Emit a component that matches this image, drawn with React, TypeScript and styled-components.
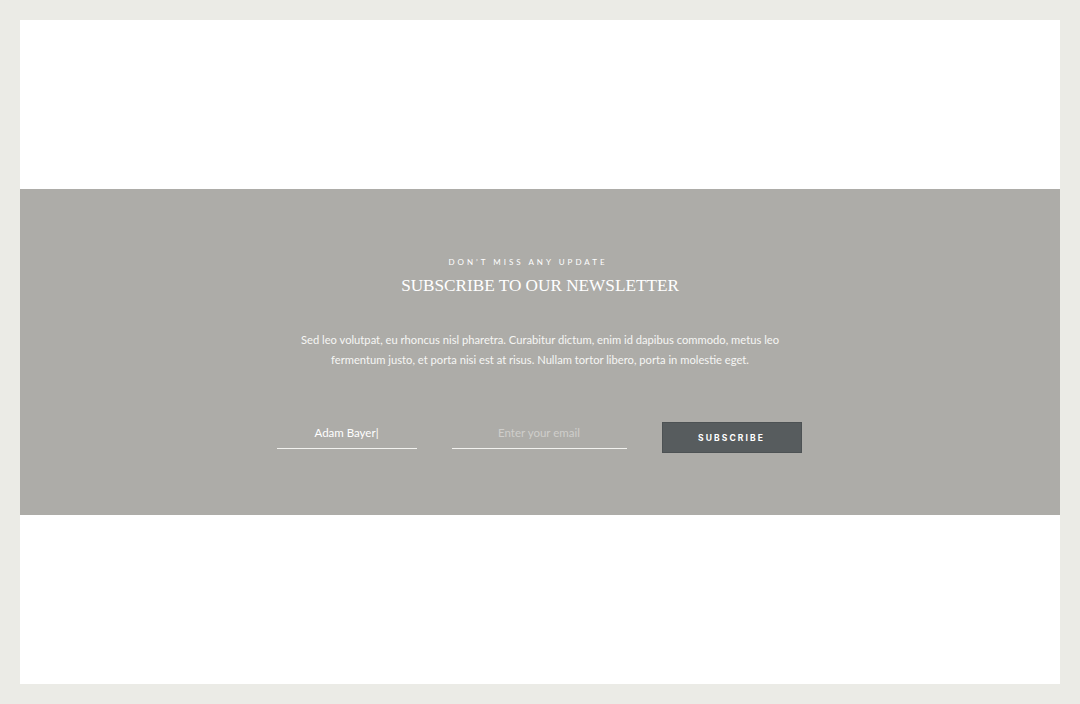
import React from 'react'
import styled, { createGlobalStyle } from 'styled-components'

const GlobalStyle = createGlobalStyle`
  html, body {
    margin: 0;
    padding: 0;
    background: #ebebe6;
  }
  * {
    box-sizing: border-box;
  }
`

const Frame = styled.div`
  width: 1080px;
  height: 704px;
  padding: 20px;
  background: #ebebe6;
  border-radius: 10px;
`

const Page = styled.div`
  height: 664px;
  background: #ffffff;
  display: flex;
  flex-direction: column;
`

const Spacer = styled.div<{ $h: number }>`
  height: ${({ $h }) => $h}px;
  flex-shrink: 0;
`

const Band = styled.section`
  height: 326px;
  background: #adaca8;
  display: flex;
  flex-direction: column;
  align-items: center;
  padding-top: 67px;
  color: #ffffff;
`

const Eyebrow = styled.div`
  font-family: 'Lato', sans-serif;
  font-size: 8px;
  letter-spacing: 3px;
  text-transform: uppercase;
  line-height: 12px;
  margin-right: 24px;
`

const Title = styled.h2`
  margin: 7px 0 0;
  font-family: 'Liberation Serif', serif;
  font-weight: 400;
  font-size: 17.2px;
  line-height: 22px;
  letter-spacing: 0;
  text-transform: uppercase;
`

const Text = styled.p`
  margin: 33px 0 0;
  width: 500px;
  text-align: center;
  font-family: 'Lato', sans-serif;
  font-size: 11.2px;
  line-height: 20px;
  color: #f6f6f4;
`

const Form = styled.form`
  margin-top: 49px;
  margin-right: 2px;
  display: flex;
  align-items: flex-end;
  gap: 35px;
`

const Field = styled.input<{ $w: number }>`
  width: ${({ $w }) => $w}px;
  height: 30px;
  border: none;
  border-bottom: 1px solid #f2f2ef;
  background: transparent;
  outline: none;
  text-align: center;
  font-family: 'Lato', sans-serif;
  font-size: 11.5px;
  color: #ffffff;
  padding: 0 0 3px;

  &::placeholder {
    color: #cfcecb;
  }
`

const Button = styled.button`
  width: 140px;
  height: 31px;
  margin-bottom: -4px;
  background: #575c5e;
  border: 1px solid #4d5254;
  color: #ffffff;
  font-family: 'Inter', sans-serif;
  font-weight: 700;
  font-size: 8.5px;
  letter-spacing: 2.1px;
  text-transform: uppercase;
  cursor: pointer;
`

export default function App() {
  return (
    <>
      <GlobalStyle />
      <Frame>
        <Page>
          <Spacer $h={169} />
          <Band>
            <Eyebrow>Don’t miss any update</Eyebrow>
            <Title>Subscribe to our newsletter</Title>
            <Text>
              Sed leo volutpat, eu rhoncus nisl pharetra. Curabitur dictum, enim id dapibus
              commodo, metus leo fermentum justo, et porta nisi est at risus. Nullam tortor
              libero, porta in molestie eget.
            </Text>
            <Form onSubmit={(e) => e.preventDefault()}>
              <Field $w={140} type="text" defaultValue="Adam Bayer|" />
              <Field $w={175} type="email" placeholder="Enter your email" />
              <Button type="submit">Subscribe</Button>
            </Form>
          </Band>
        </Page>
      </Frame>
    </>
  )
}
